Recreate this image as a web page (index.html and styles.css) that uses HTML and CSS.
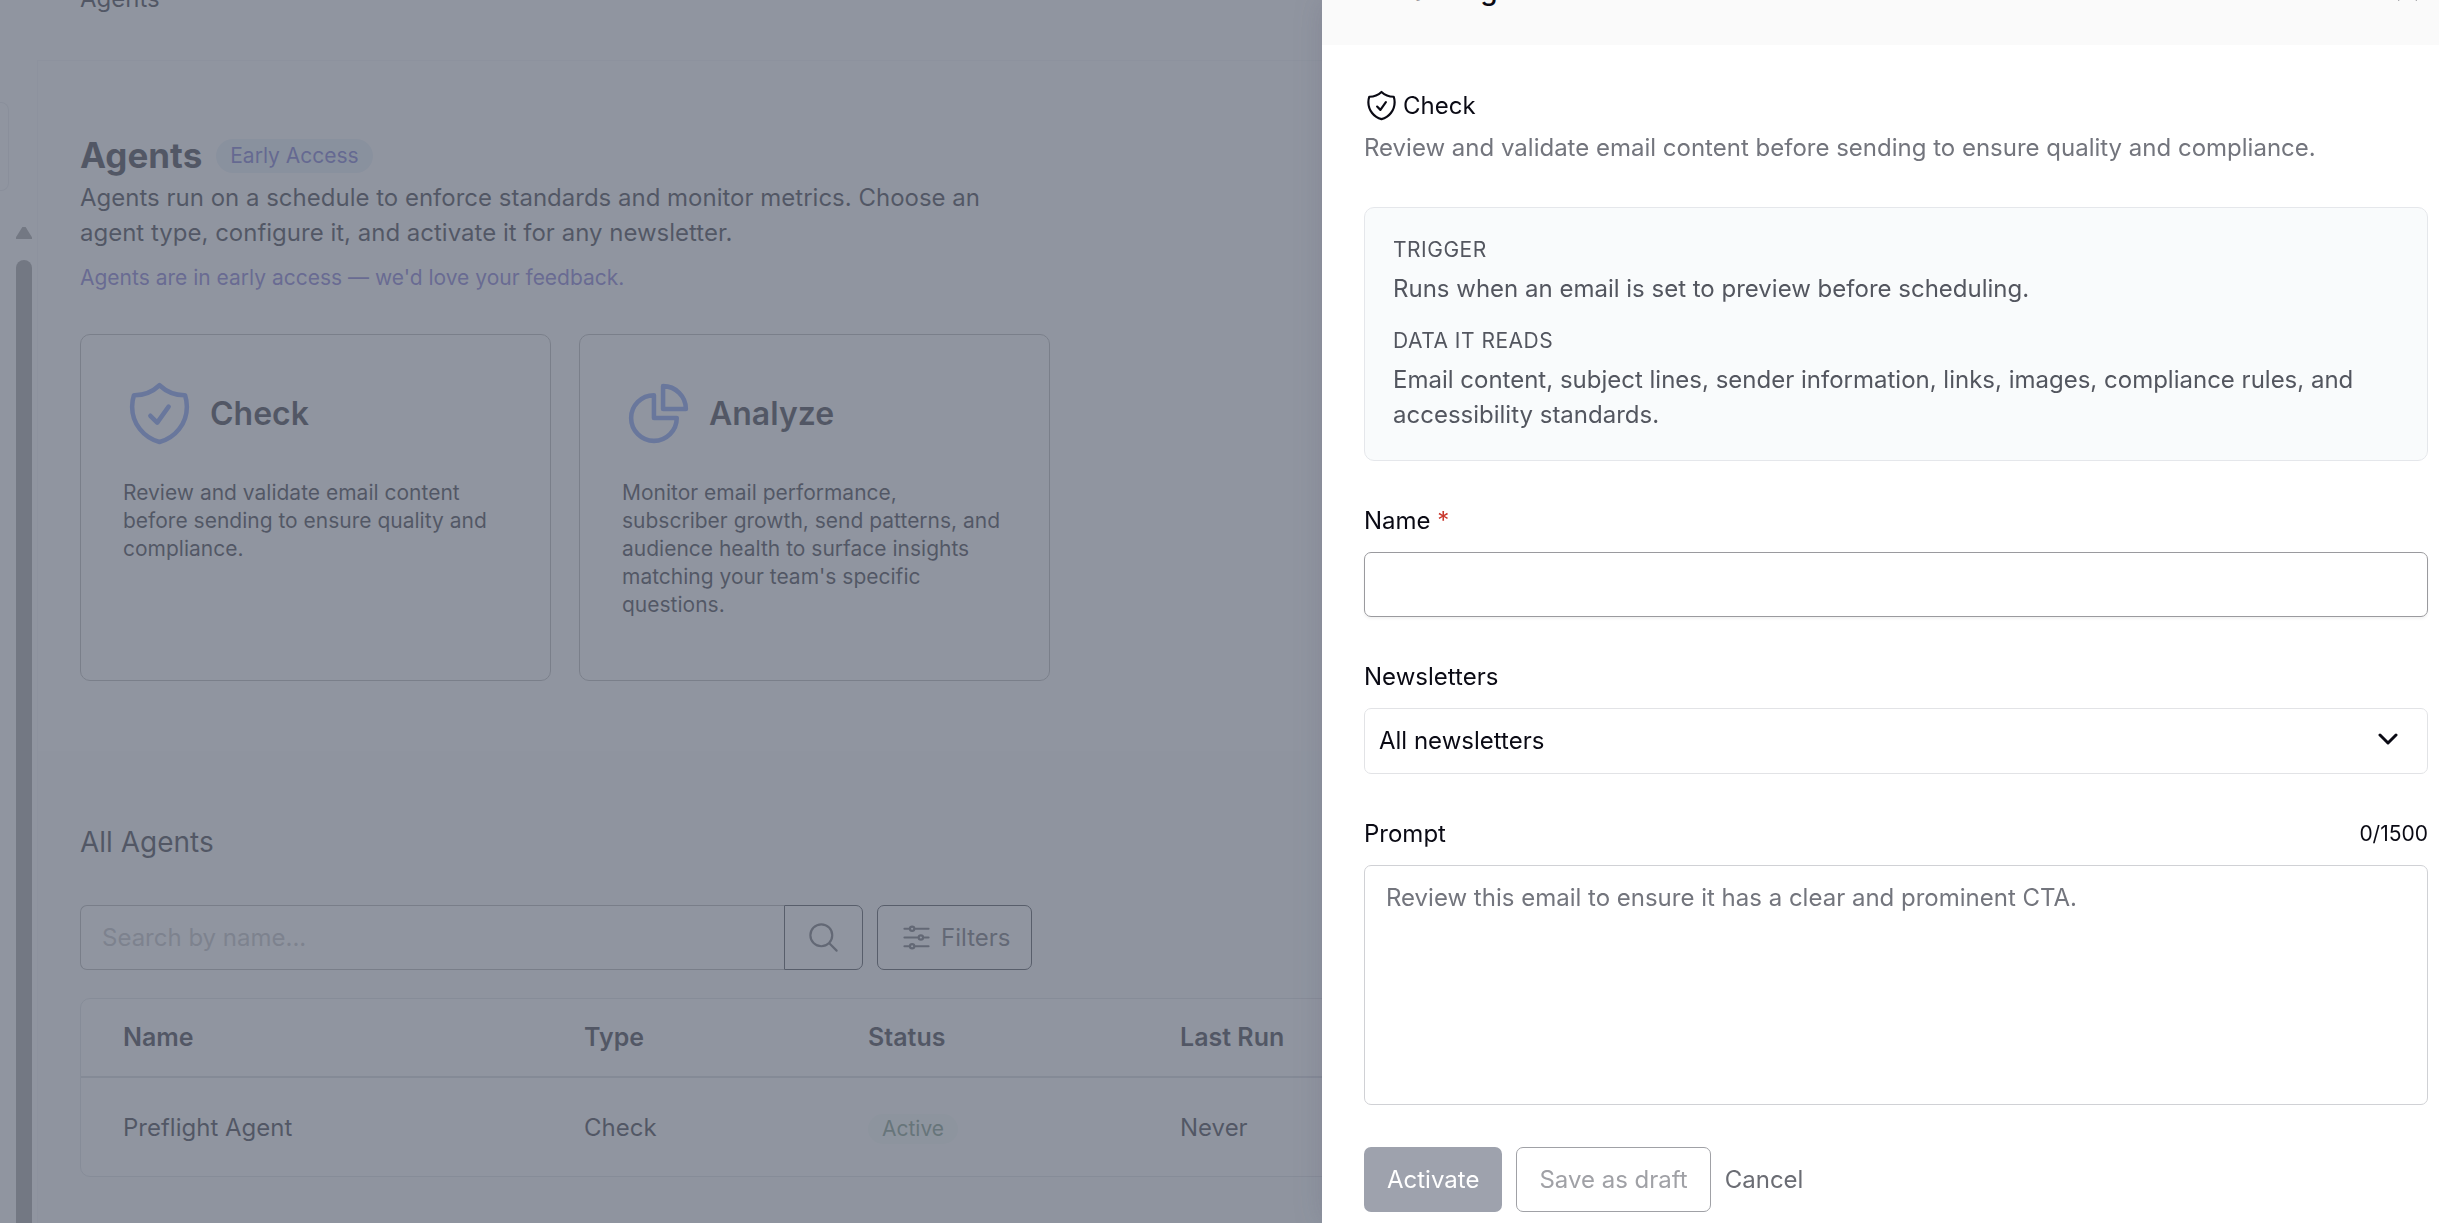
FILE: index.html
```
<!DOCTYPE html>
<html lang="en">
<head>
  <meta charset="UTF-8">
  <title>Create Agent</title>
  <link rel="stylesheet" href="styles.css">
</head>
<body>

<div class="page">
  <aside class="sidebar">
    <div class="sidebar-box"></div>
    <div class="scroll-arrow"></div>
    <div class="scroll-thumb"></div>
  </aside>

  <main class="main">
    <nav class="breadcrumb">Agents</nav>

    <div class="panel">
      <section class="hero">
        <div class="hero-title">
          <h1>Agents</h1>
          <span class="badge badge-early">Early Access</span>
        </div>
        <p class="hero-text">Agents run on a schedule to enforce standards and monitor metrics. Choose an agent type, configure it, and activate it for any newsletter.</p>
        <a class="feedback" href="#">Agents are in early access — we'd love your feedback.</a>

        <div class="cards">
          <div class="card">
            <div class="card-head">
              <svg class="icon-lg" viewBox="0 0 24 24"><path d="M9 12.75 11.25 15 15 9.75m-3-7.036A11.959 11.959 0 0 1 3.598 6 11.99 11.99 0 0 0 3 9.749c0 5.592 3.824 10.29 9 11.623 5.176-1.332 9-6.03 9-11.622 0-1.31-.21-2.571-.598-3.751h-.152c-3.196 0-6.1-1.248-8.25-3.285Z"/></svg>
              <h2>Check</h2>
            </div>
            <p>Review and validate email content before sending to ensure quality and compliance.</p>
          </div>
          <div class="card">
            <div class="card-head">
              <svg class="icon-lg" viewBox="0 0 24 24"><path d="M10.5 6a7.5 7.5 0 1 0 7.5 7.5h-7.5V6Z"/><path d="M13.5 10.5H21A7.5 7.5 0 0 0 13.5 3v7.5Z"/></svg>
              <h2>Analyze</h2>
            </div>
            <p>Monitor email performance, subscriber growth, send patterns, and audience health to surface insights matching your team's specific questions.</p>
          </div>
        </div>
      </section>

      <section class="agents">
        <h3>All Agents</h3>
        <div class="toolbar">
          <div class="search">
            <input type="text" aria-label="Search by name" placeholder="Search by name...">
            <button class="search-btn" aria-label="Search">
              <svg class="icon" viewBox="0 0 24 24"><path d="m21 21-5.197-5.197m0 0A7.5 7.5 0 1 0 5.196 5.196a7.5 7.5 0 0 0 10.607 10.607Z"/></svg>
            </button>
          </div>
          <button class="filter-btn">
            <svg class="icon" viewBox="0 0 24 24"><path d="M10.5 6h9.75M10.5 6a1.5 1.5 0 1 1-3 0m3 0a1.5 1.5 0 1 0-3 0M3.75 6H7.5m3 12h9.75m-9.75 0a1.5 1.5 0 0 1-3 0m3 0a1.5 1.5 0 0 0-3 0m-3.75 0H7.5m9-6h3.75m-3.75 0a1.5 1.5 0 0 1-3 0m3 0a1.5 1.5 0 0 0-3 0m-9.75 0h9.75"/></svg>
            Filters
          </button>
        </div>

        <div class="table-wrap">
          <table>
            <thead>
              <tr>
                <th class="col-name">Name</th>
                <th class="col-type">Type</th>
                <th class="col-status">Status</th>
                <th>Last Run</th>
              </tr>
            </thead>
            <tbody>
              <tr>
                <td>Preflight Agent</td>
                <td>Check</td>
                <td><span class="badge badge-active">Active</span></td>
                <td>Never</td>
              </tr>
            </tbody>
          </table>
        </div>
      </section>
    </div>
  </main>
</div>

<div class="overlay"></div>

<div class="drawer" role="dialog" aria-label="Create Agent">
  <div class="drawer-header">
    <h2>Create Agent</h2>
    <button class="close-btn" aria-label="Close">
      <svg class="icon" viewBox="0 0 24 24"><path d="M6 18 18 6M6 6l12 12"/></svg>
    </button>
  </div>

  <form class="drawer-body">
    <div class="agent-type">
      <div class="agent-type-name">
        <svg class="icon" viewBox="0 0 24 24"><path d="M9 12.75 11.25 15 15 9.75m-3-7.036A11.959 11.959 0 0 1 3.598 6 11.99 11.99 0 0 0 3 9.749c0 5.592 3.824 10.29 9 11.623 5.176-1.332 9-6.03 9-11.622 0-1.31-.21-2.571-.598-3.751h-.152c-3.196 0-6.1-1.248-8.25-3.285Z"/></svg>
        <span>Check</span>
      </div>
      <p>Review and validate email content before sending to ensure quality and compliance.</p>
    </div>

    <dl class="info">
      <div>
        <dt>Trigger</dt>
        <dd>Runs when an email is set to preview before scheduling.</dd>
      </div>
      <div>
        <dt>Data it reads</dt>
        <dd>Email content, subject lines, sender information, links, images, compliance rules, and accessibility standards.</dd>
      </div>
    </dl>

    <div class="field">
      <label for="name">Name <span class="required">*</span></label>
      <input type="text" id="name">
    </div>

    <div class="field">
      <label for="newsletters">Newsletters</label>
      <div class="select">
        <select id="newsletters">
          <option>All newsletters</option>
        </select>
        <svg class="chevron" viewBox="0 0 20 12"><path d="m2 2 8 8 8-8"/></svg>
      </div>
    </div>

    <div class="field">
      <div class="label-row">
        <label for="prompt">Prompt</label>
        <span class="counter">0/1500</span>
      </div>
      <textarea id="prompt" placeholder="Review this email to ensure it has a clear and prominent CTA."></textarea>
    </div>

    <div class="actions">
      <button type="button" class="btn btn-primary" disabled>Activate</button>
      <button type="button" class="btn btn-outline" disabled>Save as draft</button>
      <button type="button" class="btn btn-text">Cancel</button>
    </div>
  </form>
</div>

</body>
</html>
```
FILE: styles.css
```
* {
  box-sizing: border-box;
}
body {
  margin: 0;
  height: 100vh;
  overflow: hidden;
  background: #fff;
  color: #0a0a14;
  font-family: Inter, "Liberation Sans", sans-serif;
  font-size: 24px;
  line-height: 35px;
}
h1, h2, h3, p, dl, dd {
  margin: 0;
}
input, select, textarea, button {
  font: inherit;
  color: inherit;
}
button {
  cursor: pointer;
}
svg {
  display: block;
  flex-shrink: 0;
  fill: none;
  stroke: currentColor;
  stroke-width: 1.5;
  stroke-linecap: round;
  stroke-linejoin: round;
}
.icon {
  width: 35px;
  height: 35px;
}

/* page behind the drawer */
.page {
  display: flex;
  height: 100vh;
}
.sidebar {
  width: 37px;
  padding-top: 102px;
  display: flex;
  flex-direction: column;
}
.sidebar-box {
  width: 9px;
  height: 89px;
  border: 1px solid #e5e7eb;
  border-left: none;
  border-radius: 0 8px 8px 0;
}
.scroll-arrow {
  width: 16px;
  height: 12px;
  margin: 36px 0 21px 16px;
  background: #8b8b8b;
  clip-path: polygon(40% 0, 60% 0, 100% 85%, 100% 100%, 0 100%, 0 85%);
}
.scroll-thumb {
  width: 16px;
  flex: 1;
  margin-left: 16px;
  border-radius: 8px 8px 0 0;
  background: #8b8b8b;
}
.main {
  flex: 1;
  display: flex;
  flex-direction: column;
}
.breadcrumb {
  margin-top: -19px;
  padding: 0 43px 44px;
}
.panel {
  flex: 1;
  border: 1px solid #f3f4f6;
  border-right: none;
  background: #f9fcfc;
}
.hero {
  padding: 70px 42px;
  background: #fff;
}
.hero-title {
  display: flex;
  align-items: center;
  gap: 14px;
  height: 49px;
}
.hero-title h1 {
  font-size: 35px;
  font-weight: 700;
}
.hero-text {
  max-width: 960px;
}
.feedback {
  display: block;
  margin: 14px 0 42px;
  font-size: 21px;
  line-height: 28px;
  color: #6558c8;
  text-decoration: none;
}
.badge {
  display: inline-block;
  padding: 0 14px;
  border-radius: 17px;
  font-size: 21px;
  line-height: 34px;
}
.badge-early {
  background: #e4edf6;
  color: #5552c4;
}
.badge-active {
  background: #f2faf6;
  color: #5c8068;
  line-height: 30px;
}
.cards {
  display: flex;
  gap: 28px;
}
.card {
  width: 471px;
  min-height: 347px;
  padding: 42px;
  border: 1px solid #a8a8a8;
  border-radius: 10px;
  font-size: 21px;
  line-height: 28px;
}
.card-head {
  display: flex;
  align-items: center;
  gap: 14px;
  margin-bottom: 29px;
}
.card-head h2 {
  font-size: 32px;
  font-weight: 600;
}
.icon-lg {
  width: 73px;
  height: 73px;
  color: #6488f0;
}
.agents {
  padding: 71px 42px;
}
.agents h3 {
  font-size: 28px;
  line-height: 40px;
  font-weight: 400;
}
.toolbar {
  display: flex;
  gap: 14px;
  margin: 43px 0 28px;
  height: 65px;
}
.search {
  display: flex;
}
.search input {
  width: 704px;
  padding: 0 21px;
  border: 1px solid #a4a4a4;
  border-right: none;
  border-radius: 7px 0 0 7px;
  background: #fff;
}
.search input::placeholder {
  color: #b4b4b8;
}
.search-btn, .filter-btn {
  display: flex;
  align-items: center;
  gap: 7px;
  padding: 0 21px;
  border: 1px solid #20242c;
  background: #fff;
  color: #4b4e55;
}
.search-btn {
  border-radius: 0 7px 7px 0;
}
.filter-btn {
  border-radius: 7px;
}
.table-wrap {
  border: 1px solid #d8dade;
  border-radius: 10px;
  background: #fff;
  overflow: hidden;
}
table {
  width: 100%;
  table-layout: fixed;
  border-collapse: collapse;
}
th, td {
  padding: 0 0 0 42px;
  text-align: left;
}
th {
  height: 78px;
  border-bottom: 2px solid #d0d2d8;
  font-size: 25px;
  font-weight: 600;
}
td {
  height: 99px;
}
.col-name {
  width: 461px;
}
.col-type {
  width: 284px;
}
.col-status {
  width: 312px;
}

.overlay {
  position: fixed;
  inset: 0;
  background: rgba(107, 113, 128, 0.75);
}

/* drawer */
.drawer {
  position: fixed;
  top: 0;
  right: 0;
  bottom: 0;
  width: 1117px;
  max-width: 100%;
  background: #fff;
  box-shadow: 0 0 28px rgba(80, 70, 100, 0.2);
}
.drawer-header {
  display: flex;
  align-items: center;
  justify-content: space-between;
  height: 100px;
  margin-top: -55px;
  padding: 0 14px 9px 42px;
  background: #fafafa;
}
.drawer-header h2 {
  font-size: 28px;
  font-weight: 500;
}
.close-btn {
  padding: 0;
  border: none;
  background: none;
}
.drawer-body {
  display: flex;
  flex-direction: column;
  gap: 42px;
  padding: 43px 11px 42px 42px;
}
.agent-type-name {
  display: flex;
  align-items: center;
  gap: 4px;
  margin-bottom: 7px;
}
.agent-type p {
  color: #73757d;
}
.info {
  display: flex;
  flex-direction: column;
  gap: 21px;
  padding: 28px;
  border: 1px solid #e5e7eb;
  border-radius: 10px;
  background: #f9fbfc;
  color: #53565f;
}
.info dt {
  margin-bottom: 7px;
  font-size: 21px;
  line-height: 28px;
  text-transform: uppercase;
  letter-spacing: 0.5px;
}
.field {
  display: flex;
  flex-direction: column;
  gap: 14px;
}
.required {
  color: #c9372c;
}
.field input {
  height: 65px;
  padding: 0 21px;
  border: 1px solid #9a9a9e;
  border-radius: 7px;
  box-shadow: 0 2px 3px rgba(0, 0, 0, 0.05);
}
.select {
  position: relative;
}
.select select {
  display: block;
  width: 100%;
  height: 66px;
  padding: 0 56px 2px 14px;
  border: 1px solid #e2e3e6;
  border-radius: 7px;
  background: #fff;
  appearance: none;
}
.chevron {
  position: absolute;
  top: 25px;
  right: 30px;
  width: 20px;
  height: 12px;
  stroke-width: 3;
  pointer-events: none;
}
.label-row {
  display: flex;
  justify-content: space-between;
}
.counter {
  font-size: 21px;
}
.field textarea {
  height: 240px;
  padding: 14px 21px;
  border: 1px solid #d0d1d5;
  border-radius: 7px;
  resize: none;
}
.field textarea::placeholder {
  color: #73757d;
}
.actions {
  display: flex;
  gap: 14px;
}
.btn {
  height: 65px;
  padding: 0 22px;
  border: 1px solid transparent;
  border-radius: 7px;
  background: #fff;
}
.btn-primary {
  background: #9ea2ad;
  color: #fff;
}
.btn-outline {
  border-color: #a0a1a6;
  color: #a0a1a6;
}
.btn-text {
  padding: 0;
  border: none;
  color: #6b6d74;
}
```
